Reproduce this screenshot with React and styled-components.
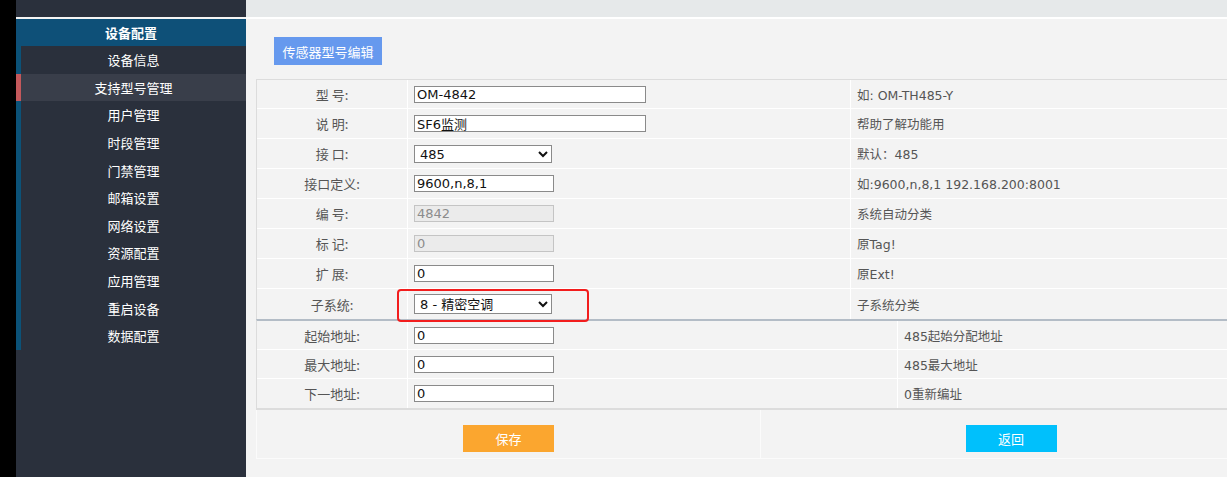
import styled, { createGlobalStyle } from 'styled-components';

const GlobalStyle = createGlobalStyle`
  html, body {
    margin: 0;
    padding: 0;
    height: 100%;
    overflow: hidden;
    background: #000;
  }
  #root {
    height: 100%;
  }
  * {
    box-sizing: border-box;
  }
`;

const FONT = `"DejaVu Sans", "Noto Sans CJK SC", sans-serif`;

const menu = [
  '设备信息',
  '支持型号管理',
  '用户管理',
  '时段管理',
  '门禁管理',
  '邮箱设置',
  '网络设置',
  '资源配置',
  '应用管理',
  '重启设备',
  '数据配置',
];

const fields = [
  { label: '型 号:', value: 'OM-4842', width: 232, hint: '如: OM-TH485-Y' },
  { label: '说 明:', value: 'SF6监测', width: 232, hint: '帮助了解功能用' },
  { label: '接 口:', value: '485', width: 138, select: true, hint: '默认：485' },
  { label: '接口定义:', value: '9600,n,8,1', width: 140, hint: '如:9600,n,8,1 192.168.200:8001' },
  { label: '编 号:', value: '4842', width: 140, disabled: true, hint: '系统自动分类' },
  { label: '标 记:', value: '0', width: 140, disabled: true, hint: '原Tag!' },
  { label: '扩 展:', value: '0', width: 140, hint: '原Ext!' },
  { label: '子系统:', value: '8 - 精密空调', width: 138, select: true, marked: true, hint: '子系统分类' },
];

const addrFields = [
  { label: '起始地址:', value: '0', hint: '485起始分配地址' },
  { label: '最大地址:', value: '0', hint: '485最大地址' },
  { label: '下一地址:', value: '0', hint: '0重新编址' },
];

const App = () => {
  return (
    <>
      <GlobalStyle />
      <Page>
        <Sidebar>
          <SideTop />
          <SideHeader>设备配置</SideHeader>
          <Menu>
            {menu.map((item, i) => (
              <MenuItem key={item} $active={i === 1}>
                {item}
              </MenuItem>
            ))}
          </Menu>
        </Sidebar>
        <Main>
          <TopBar />
          <Content>
            <TitleButton>传感器型号编辑</TitleButton>
            <Table>
              {fields.map((f, i) => (
                <Row key={f.label} $cols="151px 443px 1fr" $h={i === 0 ? 29 : 30}>
                  <LabelCell>{f.label}</LabelCell>
                  <InputCell>
                    {f.select ? (
                      <Select $w={f.width} $h={f.marked ? 20 : 18} defaultValue={f.value}>
                        <option>{f.value}</option>
                      </Select>
                    ) : (
                      <Input $w={f.width} defaultValue={f.value} disabled={f.disabled} />
                    )}
                    {f.marked && <Mark />}
                  </InputCell>
                  <HintCell>{f.hint}</HintCell>
                </Row>
              ))}
            </Table>
            <AddrTable>
              {addrFields.map((f) => (
                <Row key={f.label} $cols="151px 490px 1fr" $h={29}>
                  <LabelCell>{f.label}</LabelCell>
                  <InputCell>
                    <Input $w={140} defaultValue={f.value} />
                  </InputCell>
                  <HintCell>{f.hint}</HintCell>
                </Row>
              ))}
            </AddrTable>
            <ButtonTable>
              <ButtonCell>
                <ActionButton $bg="#fba62f">保存</ActionButton>
              </ButtonCell>
              <ButtonCell>
                <ActionButton $bg="#00c0fc">返回</ActionButton>
              </ButtonCell>
            </ButtonTable>
          </Content>
        </Main>
      </Page>
    </>
  );
};

const Page = styled.div`
  display: flex;
  height: 100%;
  padding-left: 16px;
  background: #000;
  font-family: ${FONT};
`;

const Sidebar = styled.div`
  width: 230px;
  flex-shrink: 0;
  background: #2a303c;
  display: flex;
  flex-direction: column;
`;

const SideTop = styled.div`
  height: 19px;
  border-bottom: 2px solid #f4f4f4;
`;

const SideHeader = styled.div`
  height: 27px;
  background: #0e5078;
  color: #fff;
  font-family: "Noto Sans CJK SC", sans-serif;
  font-weight: bold;
  font-size: 13px;
  display: flex;
  align-items: center;
  justify-content: center;
`;

const Menu = styled.div`
  display: flex;
  flex-direction: column;
`;

const MenuItem = styled.div`
  height: 27.6px;
  border-left: 5px solid ${(p) => (p.$active ? '#c4585b' : '#0b5278')};
  background: ${(p) => (p.$active ? '#393e4a' : '#2a303c')};
  color: #fff;
  font-family: "Noto Sans CJK SC", sans-serif;
  font-size: 13px;
  display: flex;
  align-items: center;
  justify-content: center;
`;

const Main = styled.div`
  flex: 1;
  background: #f3f3f3;
  overflow: hidden;
  display: flex;
  flex-direction: column;
`;

const TopBar = styled.div`
  height: 19px;
  flex-shrink: 0;
  background: #e6e9ea;
  border-bottom: 2px solid #fff;
`;

const Content = styled.div`
  padding: 18px 0 0 10px;
`;

const TitleButton = styled.div`
  margin-left: 18px;
  width: 108px;
  height: 28px;
  background: #6699ee;
  color: #fff;
  font-family: "Noto Sans CJK SC", sans-serif;
  font-size: 13px;
  display: flex;
  align-items: center;
  justify-content: center;
  margin-bottom: 14px;
`;

const Table = styled.div`
  width: 1006px;
  border-top: 1px solid #dcdcdc;
  border-left: 1px solid #dcdcdc;
  display: flex;
  flex-direction: column;
`;

const AddrTable = styled(Table)`
  border-top: 2px solid #b3bcc6;
  border-bottom: 2px solid #dcdcdc;
`;

const Row = styled.div`
  display: grid;
  grid-template-columns: ${(p) => p.$cols};
  height: ${(p) => p.$h || 30}px;
  border-bottom: 1px solid #fff;
  &:last-child {
    border-bottom: none;
  }
`;

const Cell = styled.div`
  display: flex;
  align-items: center;
  border-right: 1px solid #fff;
  font-size: 13px;
  color: #555;
`;

const LabelCell = styled(Cell)`
  justify-content: center;
  font-family: "Noto Sans CJK SC", sans-serif;
`;

const InputCell = styled(Cell)`
  position: relative;
  padding-left: 6px;
`;

const HintCell = styled(Cell)`
  padding-left: 6px;
  border-right: none;
  font-size: 12.5px;
`;

const Input = styled.input`
  width: ${(p) => p.$w}px;
  height: 17px;
  padding: 0 2px;
  border: 1px solid #8a8a8a;
  border-radius: 0;
  background: #fff;
  font-family: ${FONT};
  font-size: 13px;
  color: #111;
  outline: none;
  &:disabled {
    background: #ebebeb;
    border-color: #c4c4c4;
    color: #8c8c8c;
  }
`;

const Select = styled.select`
  width: ${(p) => p.$w}px;
  height: ${(p) => p.$h}px;
  padding: 0 1px;
  border: 1px solid #8a8a8a;
  border-radius: 0;
  background: #fff;
  font-family: ${FONT};
  font-size: 13px;
  color: #111;
  outline: none;
`;

const Mark = styled.div`
  position: absolute;
  left: -11px;
  top: 0;
  width: 192px;
  height: 33px;
  border: 2px solid #f21d1d;
  border-radius: 4px;
  pointer-events: none;
`;

const ButtonTable = styled.div`
  width: 1006px;
  height: 49px;
  display: grid;
  grid-template-columns: 504px 1fr;
  border-left: 1px solid #fbfbfb;
  border-bottom: 1px solid #fbfbfb;
`;

const ButtonCell = styled.div`
  display: flex;
  justify-content: center;
  align-items: flex-start;
  padding-top: 15px;
  border-right: 1px solid #fbfbfb;
`;

const ActionButton = styled.div`
  width: 91px;
  height: 27px;
  background: ${(p) => p.$bg};
  color: #fff;
  font-family: "Noto Sans CJK SC", sans-serif;
  font-size: 13px;
  display: flex;
  align-items: center;
  justify-content: center;
`;

export default App;
